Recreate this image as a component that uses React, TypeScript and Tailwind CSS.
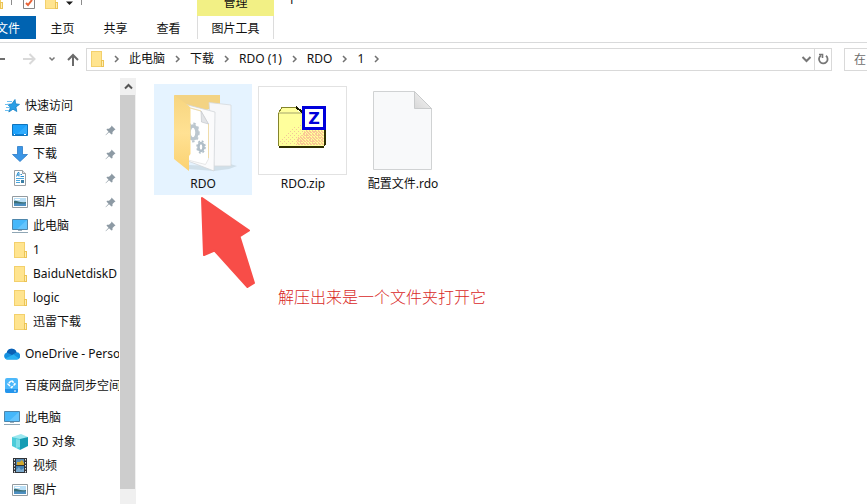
import React from 'react';

const FolderIcon: React.FC = () => (
  <svg width="16" height="16" viewBox="0 0 16 16" shapeRendering="crispEdges">
    <path d="M2 0h11v9h1v7H2z" fill="#ffe48f" />
    <path d="M2.500.5h10v15h-10z" fill="none" stroke="#f3d06c" />
    <path d="M12.500 9.500h2v6h-2z" fill="#ffeeb5" stroke="#ecc455" />
  </svg>
);

const StarIcon: React.FC = () => (
  <svg width="16" height="16" viewBox="0 0 16 16">
    <path d="M11 1.500l.6 4.300 3.900.6-3.600 2.600.9 4.500-3.800-2.300-4.200 2.800 1.700-4.700L3.500 6.400l4.300-.4z" fill="#2b9fe6" stroke="#1580c5" strokeWidth=".8" />
    <path d="M3 3.500h5M1 6.500h4M2 9.500h4M1 12.500h4" stroke="#6fc0f0" />
  </svg>
);

const DesktopIcon: React.FC = () => (
  <svg width="16" height="16" viewBox="0 0 16 16">
    <path d="M.5 2.500h15v11H.5z" fill="#1da2fb" stroke="#0f74bd" />
    <path d="M1 12.500h14" stroke="#0b80d8" />
    <path d="M2 12.500h1M12 12.500h2" stroke="#fff" />
    <path d="M15 3v9L5 12z" fill="#45b5ff" opacity=".5" />
  </svg>
);

const DownloadIcon: React.FC = () => (
  <svg width="16" height="16" viewBox="0 0 16 16">
    <path d="M5.500.5h5v8h5L8 15.500.5 8.500h5z" fill="#3b96e6" stroke="#2b7bc6" strokeWidth=".8" />
  </svg>
);

const DocumentIcon: React.FC = () => (
  <svg width="16" height="16" viewBox="0 0 16 16">
    <path d="M2.500.5h8l3 3v12h-11z" fill="#fff" stroke="#9aa0a5" />
    <path d="M10.500.5v3h3" fill="#dde2e5" stroke="#9aa0a5" />
    <path d="M4.500 6.500L6 2.500h1v4M5 5h2M8.500 4.500h1.500M8.500 6.500h3.500" fill="none" stroke="#2c8fd0" />
    <path d="M4 8.500h8M4 10.500h4M4 12.500h4" stroke="#4ba6dc" />
    <path d="M9 10h3v3H9z" fill="#3b7fa6" />
  </svg>
);

const PictureIcon: React.FC = () => (
  <svg width="16" height="16" viewBox="0 0 16 16">
    <path d="M.5 2.500h15v11H.5z" fill="#fff" stroke="#939ba0" />
    <path d="M2 4h12v8H2z" fill="#b9dff6" />
    <path d="M2 7c3-1 5 2 12 1v2H2z" fill="#3c6f76" />
    <path d="M2 9.500c4-1 8 1 12-.5v3H2z" fill="#4d8fc0" />
    <path d="M3 5.500h5" stroke="#fff" />
  </svg>
);

const ComputerIcon: React.FC = () => (
  <svg width="16" height="16" viewBox="0 0 16 16">
    <path d="M.5 1.500h15v10H.5z" fill="#45b7fa" stroke="#4f86ab" />
    <path d="M15 2v9L5 11z" fill="#82d2ff" opacity=".5" />
    <path d="M6 12h4v1H6z" fill="#9db1bf" />
    <path d="M0 14.500h16" stroke="#8fa6b5" />
  </svg>
);

const CloudIcon: React.FC = () => (
  <svg width="16" height="16" viewBox="0 0 16 16">
    <path d="M3.500 13.500A3.500 3.500 0 0 1 2.800 6.600 5 5 0 0 1 12.500 6.300a3.600 3.600 0 0 1 .2 7.200z" fill="#1590df" />
    <path d="M2.800 6.600A5 5 0 0 1 12.500 6.300L8 9z" fill="#0a5fb4" />
    <path d="M1.300 12.500L9.500 8.500l5.500 4c-.6.700-1.400 1-2.300 1H3.500c-1 0-1.600-.4-2.200-1z" fill="#29b0f2" />
  </svg>
);

const BaiduIcon: React.FC = () => (
  <svg width="16" height="16" viewBox="0 0 16 16">
    <rect x="1" y="0" width="13" height="15" rx="2" fill="#4db8fa" />
    <path d="M1 11h13v2a2 2 0 0 1-2 2H3a2 2 0 0 1-2-2z" fill="#2495ec" />
    <path d="M7.500 2.500L11 6 7.500 9.500 4 6z" fill="none" stroke="#fff" strokeWidth="1.500" strokeDasharray="3 1" />
    <path d="M10 13h2" stroke="#fff" />
  </svg>
);

const CubeIcon: React.FC = () => (
  <svg width="16" height="16" viewBox="0 0 16 16">
    <path d="M0 3l9-3 7 3-7 3z" fill="#9ce8f0" />
    <path d="M0 3l8 2v11l-8-4z" fill="#4bcbd9" />
    <path d="M8 5l8-2v9l-8 4z" fill="#159cb3" />
    <path d="M4 5l4 1v7l-4 1z" fill="#7cdde7" />
  </svg>
);

const VideoIcon: React.FC = () => (
  <svg width="16" height="16" viewBox="0 0 16 16">
    <path d="M1 0h14v15H1z" fill="#303338" />
    <path d="M4 1h8v6H4z" fill="#5b8db5" />
    <path d="M4 8h8v6H4z" fill="#4080b5" />
    <path d="M5 4h3l2-2 2 3v2H5z" fill="#d1a72c" />
    <path d="M4 12l3-3 2 3 3-2v4H4z" fill="#7cabce" />
    <path d="M2.500 1v14M13.500 1v14" stroke="#e3e6e8" strokeDasharray="1.500 1.500" />
  </svg>
);

const PinIcon: React.FC = () => (
  <svg width="11" height="11" viewBox="0 0 11 11" className="shrink-0">
    <path d="M6.500.5l4 4-1 .5-2 2v2l-1 .5L4 7.200.8 10.300l-.3-.3L3.500 6.700 1.500 4.500l.5-.8h2l2.200-2z" fill="#8d9aa4" />
  </svg>
);

const Chevron: React.FC = () => (
  <svg width="25" height="12" viewBox="0 0 25 12" className="shrink-0">
    <path d="M11 3l3 3-3 3" fill="none" stroke="#727272" strokeWidth="1.500" />
  </svg>
);

interface NavItem {
  label: string;
  icon: React.FC;
  pinned?: boolean;
  root?: boolean;
}

const navGroups: NavItem[][] = [
  [
    { label: '快速访问', icon: StarIcon, root: true },
    { label: '桌面', icon: DesktopIcon, pinned: true },
    { label: '下载', icon: DownloadIcon, pinned: true },
    { label: '文档', icon: DocumentIcon, pinned: true },
    { label: '图片', icon: PictureIcon, pinned: true },
    { label: '此电脑', icon: ComputerIcon, pinned: true },
    { label: '1', icon: FolderIcon },
    { label: 'BaiduNetdiskD', icon: FolderIcon },
    { label: 'logic', icon: FolderIcon },
    { label: '迅雷下载', icon: FolderIcon },
  ],
  [{ label: 'OneDrive - Perso', icon: CloudIcon, root: true }],
  [{ label: '百度网盘同步空间', icon: BaiduIcon, root: true }],
  [
    { label: '此电脑', icon: ComputerIcon, root: true },
    { label: '3D 对象', icon: CubeIcon },
    { label: '视频', icon: VideoIcon },
    { label: '图片', icon: PictureIcon },
  ],
];

const crumbs = ['此电脑', '下载', 'RDO (1)', 'RDO', '1'];
const tabs = ['主页', '共享', '查看'];

const OpenFolder: React.FC = () => (
  <svg width="89" height="89" viewBox="0 0 89 89">
    <defs>
      <linearGradient id="cover" x1="0" y1="0" x2="0" y2="1">
        <stop offset="0" stopColor="#f7d57f" />
        <stop offset=".5" stopColor="#ffe193" />
        <stop offset="1" stopColor="#fbd272" />
      </linearGradient>
    </defs>
    <path d="M56 80l16-2 7 2-8 3-15 2-26-2v-4z" fill="#cbd9e4" opacity=".8" />
    <path d="M16 9h46v10L32 30z" fill="#f3d384" />
    <path d="M51 16.500l22 2.500v61H56z" fill="#f6f7f9" stroke="#d5d9dd" strokeWidth=".8" />
    <path d="M26 18l31 8-1 59-26-10z" fill="#fbfbfc" stroke="#d2d5d9" strokeWidth=".8" />
    <path d="M28 21l15 4 7.500 13v35l-3 5.500L30 74z" fill="#fff" stroke="#e2e2e2" strokeWidth=".8" />
    <path d="M43 25l7.500 13-7-2z" fill="#e2e4e7" stroke="#bfc3c7" strokeWidth=".6" />
    <path d="M29 21l14 4M50.500 38v34" stroke="#f0d89b" strokeWidth=".8" />
    <ellipse cx="35" cy="46.500" rx="4" ry="6.500" fill="none" stroke="#bcc7cf" strokeWidth="3.500" />
    <ellipse cx="35" cy="46.500" rx="5.700" ry="9" fill="none" stroke="#bcc7cf" strokeWidth="2" strokeDasharray="2.500 2.500" />
    <ellipse cx="43" cy="61" rx="2.500" ry="4" fill="none" stroke="#b0bec8" strokeWidth="2.500" />
    <ellipse cx="43" cy="61" rx="4" ry="6" fill="none" stroke="#b0bec8" strokeWidth="1.500" strokeDasharray="2 2" />
    <path d="M16 9l15 11q1.500 1 1.500 4v44l-1.500 2v15L16 73z" fill="url(#cover)" />
  </svg>
);

const ZipThumb: React.FC = () => (
  <svg width="89" height="89" viewBox="0 0 89 89" shapeRendering="crispEdges">
    <defs>
      <pattern id="sparse" width="4" height="4" patternUnits="userSpaceOnUse">
        <path d="M0 1h1v1H0zM2 3h1v1H2z" fill="#f3c79a" />
      </pattern>
      <pattern id="dense" width="3" height="3" patternUnits="userSpaceOnUse">
        <path d="M0 0h2v1H0zM1 1h2v1H1zM0 2h1v1H0z" fill="#fcc795" />
      </pattern>
    </defs>
    <rect x=".5" y=".5" width="88" height="88" fill="#fff" stroke="#e2e2e2" />
    <path d="M20 27l4-5h14l4 5h25v33H20z" fill="#ffff9c" />
    <path d="M20 26h24v2H20z" fill="#d2d284" />
    <path d="M21 26l3-4.500h14" fill="none" stroke="#84842c" />
    <path d="M38 21l6 5" stroke="#1a1a00" strokeWidth="2" />
    <path d="M20.500 27v33" stroke="#84842c" />
    <path d="M22 59v-6l8-5 6-7 8-3v6h22v15z" fill="url(#sparse)" />
    <path d="M38 59v-6l8-6v-4h20v16z" fill="url(#dense)" />
    <path d="M66 28h2v31h-1v1h-1v2H21v-2h45z" fill="#302f00" />
    <rect x="45.500" y="21.500" width="21" height="21" fill="#fff" stroke="#0000db" strokeWidth="3" />
    <text x="56" y="38" textAnchor="middle" fill="#0000db" fontSize="16" fontWeight="bold" fontFamily="DejaVu Sans, sans-serif">Z</text>
  </svg>
);

const BlankFile: React.FC = () => (
  <svg width="89" height="89" viewBox="0 0 89 89">
    <defs>
      <linearGradient id="fold" x1="0" y1="1" x2="1" y2="0">
        <stop offset="0" stopColor="#d8d8d8" />
        <stop offset="1" stopColor="#f7f7f7" />
      </linearGradient>
    </defs>
    <path d="M15.500 5.500h41l17 17v61h-58z" fill="#f8f9fa" stroke="#d0d2d3" />
    <path d="M56.500 5.500v17h17z" fill="url(#fold)" stroke="#c9cbcc" />
  </svg>
);

const files = [
  { name: 'RDO', thumb: OpenFolder, selected: true },
  { name: 'RDO.zip', thumb: ZipThumb, selected: false },
  { name: '配置文件.rdo', thumb: BlankFile, selected: false },
];

const Ribbon: React.FC = () => (
  <header className="flex h-[43px] overflow-hidden border-b border-[#d9dadb]">
    <div className="flex w-[197px] shrink-0 flex-col">
      <div className="-ml-3 flex h-4 items-start">
        <div className="-mt-[7px]"><FolderIcon /></div>
        <span className="ml-[7px] h-[5px] w-px bg-[#8c8c8c]" />
        <svg width="12" height="9" viewBox="0 0 12 9" className="ml-[11px]">
          <path d="M.5-5v13.500h11V-5" fill="#fff" stroke="#858585" />
          <path d="M3 3l2 2 4-5" fill="none" stroke="#e86236" strokeWidth="2" />
        </svg>
        <div className="-mt-[7px] ml-2"><FolderIcon /></div>
        <svg width="7" height="6" viewBox="0 0 7 6" className="ml-[7px]">
          <path d="M0 1.500h7L3.500 5z" fill="#1a1a1a" />
        </svg>
        <span className="ml-2 h-[5px] w-px bg-[#8c8c8c]" />
      </div>
      <nav className="flex h-[23px]">
        <button className="-ml-5 w-14 bg-[#0063b1] pt-[2px] text-white">文件</button>
        {tabs.map((tab) => (
          <button key={tab} className="w-[53px] pt-[2px]">{tab}</button>
        ))}
      </nav>
    </div>
    <div className="flex w-[77px] shrink-0 flex-col">
      <div className="flex h-4 items-start justify-center bg-[#f2f085]">
        <span className="-mt-[5px] leading-4">管理</span>
      </div>
      <button className="h-[23px] border-x border-[#dcdcdc] pt-[2px]">图片工具</button>
    </div>
    <span className="-mt-2 ml-[14px] leading-4">1</span>
  </header>
);

const AddressBar: React.FC = () => (
  <div className="flex h-[35px] items-center pt-px pb-1">
    <div className="flex w-[86px] shrink-0 items-center">
      <button aria-label="后退" className="-ml-2">
        <svg width="13" height="12" viewBox="0 0 13 12">
          <path d="M13 6H1M6 1L1 6l5 5" fill="none" stroke="#6e6e6e" strokeWidth="2" />
        </svg>
      </button>
      <button aria-label="前进" className="ml-[18px]">
        <svg width="13" height="12" viewBox="0 0 13 12">
          <path d="M0 6h11M6.500 1l5 5-5 5" fill="none" stroke="#d9d9d9" strokeWidth="2" />
        </svg>
      </button>
      <button aria-label="最近" className="ml-3">
        <svg width="8" height="8" viewBox="0 0 8 8">
          <path d="M1.500 2.500L4 5l2.500-2.500" fill="none" stroke="#777" strokeWidth="1.500" />
        </svg>
      </button>
      <button aria-label="上移" className="ml-[11px]">
        <svg width="12" height="13" viewBox="0 0 12 13">
          <path d="M6 13V2M1 7l5-5 5 5" fill="none" stroke="#6b6b6b" strokeWidth="2" />
        </svg>
      </button>
    </div>
    <div className="flex h-[23px] min-w-0 flex-1 items-center border border-[#d9d9d9] pl-[2px]">
      <FolderIcon />
      <div className="-ml-px flex flex-1 items-center">
        <Chevron />
        {crumbs.map((crumb) => (
          <React.Fragment key={crumb}>
            <button className="whitespace-nowrap">{crumb}</button>
            <Chevron />
          </React.Fragment>
        ))}
      </div>
      <button aria-label="历史" className="mr-[2px]">
        <svg width="11" height="10" viewBox="0 0 11 10">
          <path d="M1.500 3l4 4 4-4" fill="none" stroke="#777" strokeWidth="2" />
        </svg>
      </button>
      <button aria-label="刷新" className="flex h-full w-[17px] items-center justify-center border-l border-[#d9d9d9]">
        <svg width="12" height="12" viewBox="0 0 12 12">
          <path d="M9 2.800A4.300 4.300 0 1 1 4 2.500" fill="none" stroke="#777" strokeWidth="1.800" />
          <path d="M2 1.500h3.500V5" fill="none" stroke="#777" strokeWidth="1.600" />
        </svg>
      </button>
    </div>
    <input
      aria-label="搜索"
      placeholder="在"
      className="ml-3 h-[23px] w-[23px] shrink-0 border-y border-l border-[#d9d9d9] pl-[9px] outline-none placeholder:text-[#6d6d6d]"
    />
  </div>
);

const Sidebar: React.FC = () => (
  <nav className="flex w-[120px] shrink-0 flex-col gap-2 overflow-hidden pt-4 pr-px">
    {navGroups.map((group, index) => (
      <ul key={index}>
        {group.map(({ label, icon: Icon, pinned, root }) => (
          <li key={label}>
            <a href="#" className={`flex h-6 items-center gap-[5px] ${root ? 'pl-1' : 'pl-3'}`}>
              <span className="shrink-0"><Icon /></span>
              <span className="flex-1 overflow-hidden whitespace-nowrap">{label}</span>
              {pinned && <span className="pr-[3px]"><PinIcon /></span>}
            </a>
          </li>
        ))}
      </ul>
    ))}
  </nav>
);

const App: React.FC = () => {
  return (
    <div className="flex min-h-screen flex-col overflow-hidden bg-white font-['Noto_Sans','Noto_Sans_CJK_SC',sans-serif] text-[12px] leading-[18px] text-[#111]">
      <Ribbon />
      <AddressBar />
      <div className="flex flex-1">
        <Sidebar />
        <div className="flex w-4 shrink-0 flex-col bg-[#f0f0f0]">
          <button aria-label="向上滚动" className="flex h-[17px] items-center justify-center">
            <svg width="9" height="7" viewBox="0 0 9 7">
              <path d="M1 5.500L4.500 2 8 5.500" fill="none" stroke="#555" strokeWidth="2" />
            </svg>
          </button>
          <div className="mb-[15px] w-[15px] flex-1 bg-[#cdcdcd]" />
        </div>
        <main className="relative flex-1 pt-[6px] pl-[18px]">
          <div className="flex flex-wrap gap-[2px]">
            {files.map(({ name, thumb: Thumb, selected }) => (
              <button
                key={name}
                className={`w-[98px] py-[2px] text-center ${selected ? 'bg-[#e5f3ff]' : ''}`}
              >
                <div className="pl-1">
                  <Thumb />
                </div>
                <span className="block">{name}</span>
              </button>
            ))}
          </div>
          <svg width="56" height="92" viewBox="0 0 56 92" className="absolute top-[118px] left-16">
            <path
              d="M2 2L49 34.500 39.500 40.500 54 87 47.500 91 14.500 54.500 4 59z"
              fill="#f84d48"
              stroke="#f84d48"
              strokeWidth="2"
              strokeLinejoin="round"
            />
          </svg>
          <p className="absolute top-[209px] left-[142px] text-[16px] leading-5 font-light whitespace-nowrap text-[#d9281f]">
            解压出来是一个文件夹打开它
          </p>
        </main>
      </div>
    </div>
  );
};

export default App;
